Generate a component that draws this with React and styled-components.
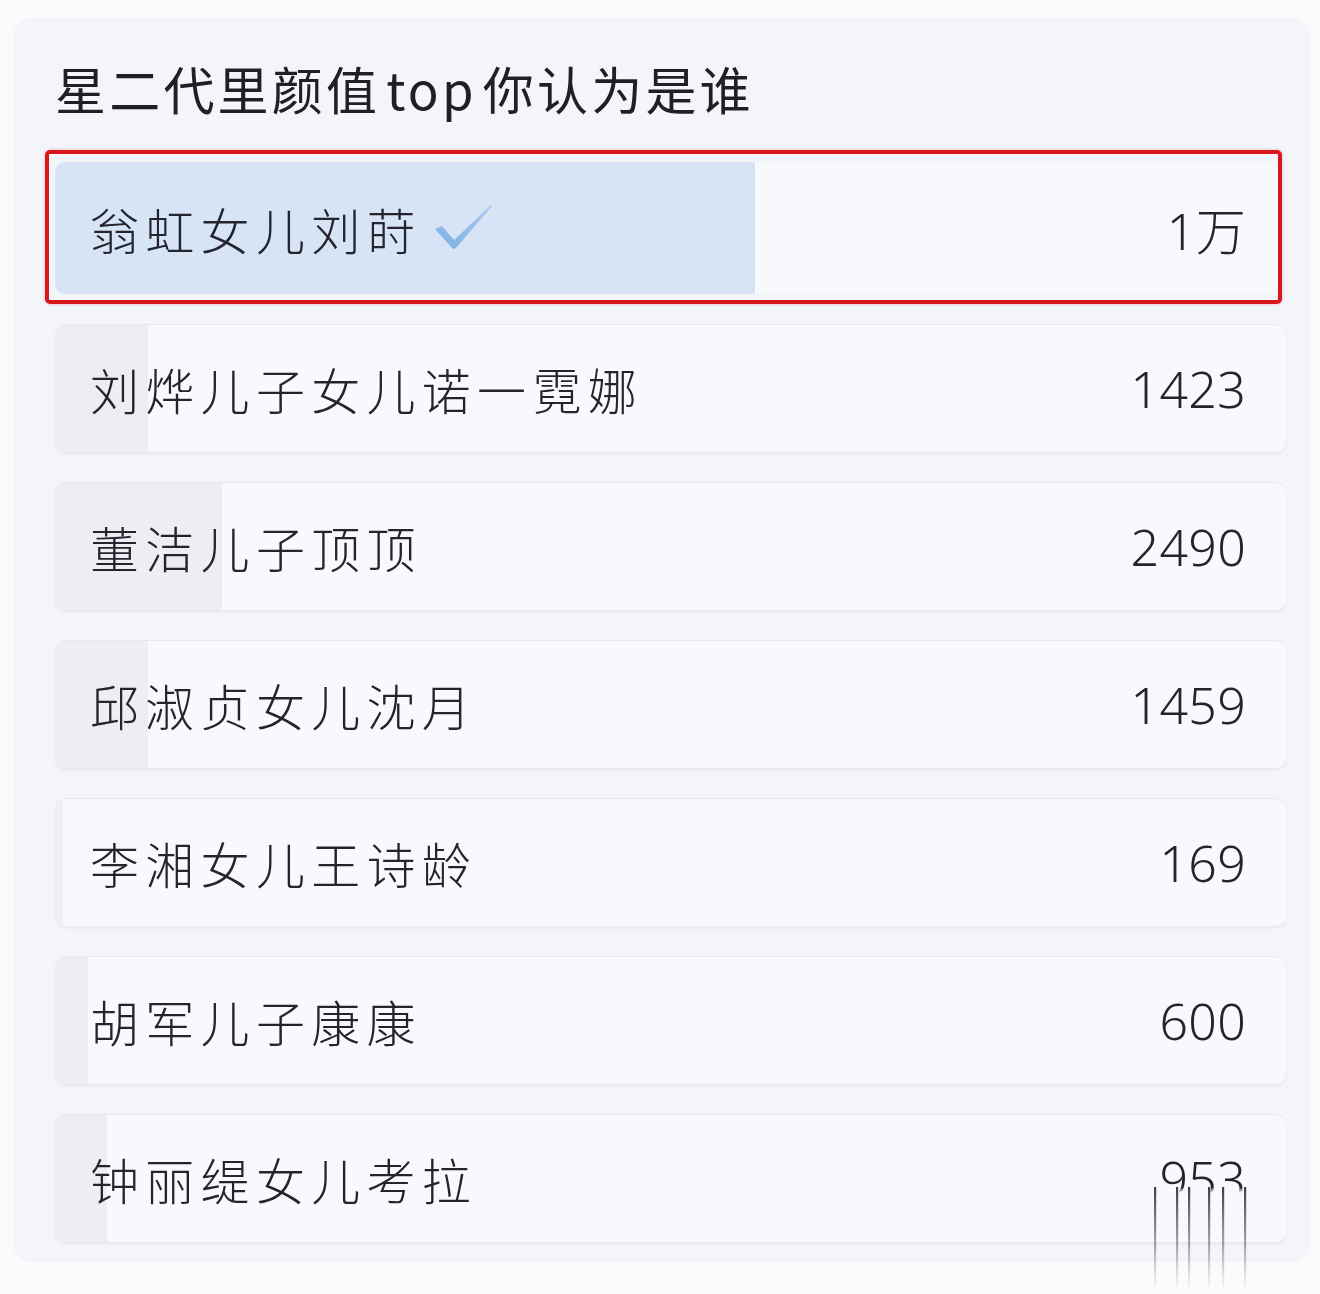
import React from "react";
import styled, { createGlobalStyle } from "styled-components";

const Global = createGlobalStyle`
  html, body { margin: 0; padding: 0; background: #fafbfd; }
  body { font-family: "Noto Sans", "Noto Sans CJK SC", sans-serif; }
`;

const Page = styled.div`
  width: 1320px;
  height: 1294px;
  box-sizing: border-box;
  padding: 18px 10px 0 13px;
  background: #fafbfd;
  overflow: hidden;
`;

const Card = styled.div`
  background: #f3f5f9;
  border-radius: 18px;
  padding: 38px 24px 16px 42px;
  height: 1244px;
  box-sizing: border-box;
  display: flex;
  flex-direction: column;
`;

const Title = styled.h1`
  margin: 0 0 30px 0;
  font-family: "Noto Sans CJK SC", "Noto Sans", sans-serif;
  font-weight: 400;
  font-size: 51px;
  line-height: 64px;
  letter-spacing: 3.2px;
  color: #1f1f26;
`;

const Latin = styled.span`
  margin: 0 6px;
`;

const List = styled.div`
  display: flex;
  flex-direction: column;
  gap: 31px;
`;

const Highlight = styled.div`
  margin-left: -10px;
  margin-right: 4px;
  border: 4px solid #d9161c;
  border-radius: 5px;
  padding: 8px 0 6px 6px;
  box-shadow: 0 0 3px rgba(217, 22, 28, 0.35);
  margin-bottom: -10px;
`;

const Row = styled.div`
  position: relative;
  height: ${(p) => (p.$tall ? 132 : 127)}px;
  border-radius: 10px;
  background: ${(p) => (p.$selected ? "#f7f9fc" : "#f8f9fc")};
  box-shadow: ${(p) =>
    p.$selected
      ? "none"
      : "0 -1px 0 rgba(0,0,0,0.05), 0 2px 3px rgba(0,0,0,0.06)"};
  display: flex;
  align-items: center;
  padding: 0 ${(p) => (p.$selected ? 32 : 40)}px 0 35px;
  box-sizing: border-box;
`;

const Fill = styled.div`
  position: absolute;
  left: 0;
  top: 0;
  bottom: 0;
  background: ${(p) => (p.$selected ? "#d6e4f6" : "#eceef3")};
  border-radius: 10px 0 0 10px;
`;

const Label = styled.span`
  position: relative;
  flex: 1;
  display: flex;
  align-items: center;
  font-family: "Noto Sans CJK SC", "Noto Sans", sans-serif;
  font-weight: 300;
  font-size: 49px;
  letter-spacing: 6.3px;
  color: #24242e;
`;

const Check = styled.svg`
  margin-left: 12px;
  width: 60px;
  height: 48px;
`;

const Count = styled.span`
  position: relative;
  font-family: "Noto Sans", "Noto Sans CJK SC", sans-serif;
  font-weight: 300;
  font-size: 50px;
  letter-spacing: 0.3px;
  color: #24242e;
  ${(p) =>
    p.$glitch &&
    `
    -webkit-mask-image: linear-gradient(to bottom, #000 0%, #000 62%, transparent 70%);
    mask-image: linear-gradient(to bottom, #000 0%, #000 62%, transparent 70%);
  `}
`;

const CountWrap = styled.span`
  position: relative;
  display: inline-flex;
`;

const Streaks = styled.svg`
  position: absolute;
  left: -6px;
  top: 42px;
  width: 100px;
  height: 100px;
  pointer-events: none;
`;

const items = [
  { name: "刘烨儿子女儿诺一霓娜", count: "1423", fill: 93 },
  { name: "董洁儿子顶顶", count: "2490", fill: 167 },
  { name: "邱淑贞女儿沈月", count: "1459", fill: 93 },
  { name: "李湘女儿王诗龄", count: "169", fill: 8 },
  { name: "胡军儿子康康", count: "600", fill: 33 },
  { name: "钟丽缇女儿考拉", count: "953", fill: 52, glitch: true },
];

const streakXs = [1, 23, 35, 55, 69, 91];

export default function App() {
  return (
    <Page>
      <Global />
      <Card>
        <Title>
          星二代里颜值<Latin>top</Latin>你认为是谁
        </Title>
        <List>
          <Highlight>
            <Row $selected $tall>
              <Fill $selected style={{ width: 700 }} />
              <Label>
                翁虹女儿刘莳
                <Check viewBox="0 0 60 48">
                  <defs>
                    <linearGradient id="ck" x1="0" y1="1" x2="1" y2="0">
                      <stop offset="0" stopColor="#7fb0e6" />
                      <stop offset="1" stopColor="#a9c9ee" />
                    </linearGradient>
                  </defs>
                  <path
                    d="M1 25 L8 22 L20 36 L57 1 L58 2 L22 44 L19 45 Z"
                    fill="url(#ck)"
                  />
                </Check>
              </Label>
              <Count>1万</Count>
            </Row>
          </Highlight>
          {items.map((it) => (
            <Row key={it.name}>
              <Fill style={{ width: it.fill }} />
              <Label>{it.name}</Label>
              {it.glitch ? (
                <CountWrap>
                  <Count $glitch>{it.count}</Count>
                  <Streaks viewBox="0 0 100 100" preserveAspectRatio="none">
                    <defs>
                      <linearGradient id="st" x1="0" y1="0" x2="0" y2="1">
                        <stop offset="0" stopColor="#2a2a35" stopOpacity="0.9" />
                        <stop offset="0.6" stopColor="#4a4a58" stopOpacity="0.45" />
                        <stop offset="1" stopColor="#6a6a78" stopOpacity="0.05" />
                      </linearGradient>
                    </defs>
                    {streakXs.map((x) => (
                      <rect key={x} x={x} y="0" width="2.2" height="100" fill="url(#st)" />
                    ))}
                  </Streaks>
                </CountWrap>
              ) : (
                <Count>{it.count}</Count>
              )}
            </Row>
          ))}
        </List>
      </Card>
    </Page>
  );
}
